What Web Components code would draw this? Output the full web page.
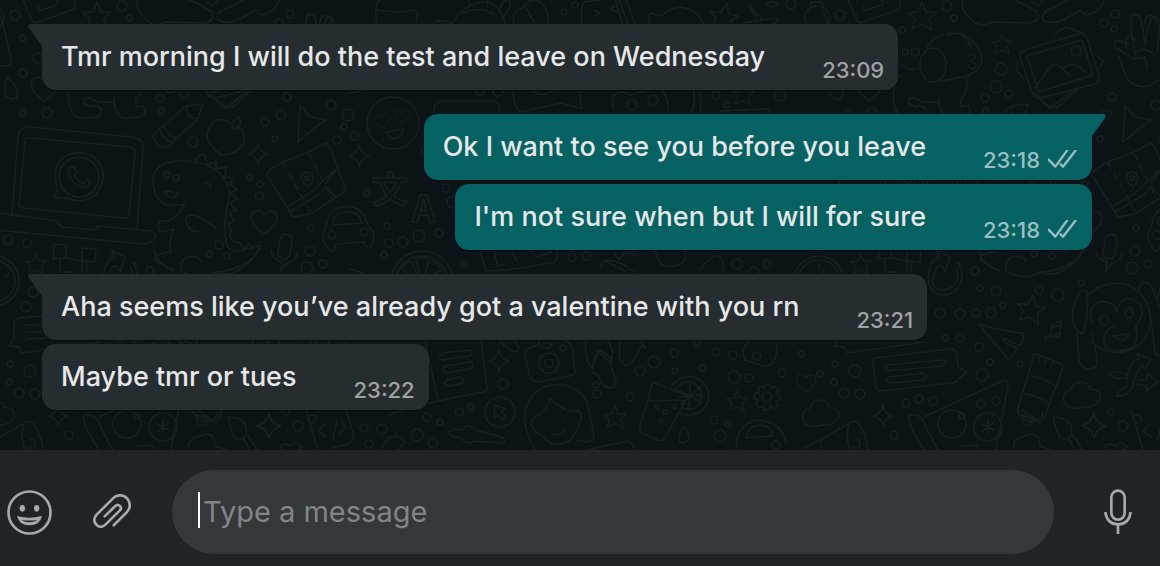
<!DOCTYPE html>
<html lang="en">
<head>
<meta charset="utf-8">
<meta name="viewport" content="width=device-width, initial-scale=1">
<title>Chat</title>
<style>
  body { margin: 0; background: #0c1317; font-family: Inter, "Liberation Sans", sans-serif; }
</style>
</head>
<body>
<chat-window>
  <chat-message tail time="23:09">Tmr morning I will do the test and leave on Wednesday</chat-message>
  <chat-message out tail time="23:18">Ok I want to see you before you leave</chat-message>
  <chat-message out time="23:18">I'm not sure when but I will for sure</chat-message>
  <chat-message tail time="23:21">Aha seems like you’ve already got a valentine with you rn</chat-message>
  <chat-message time="23:22">Maybe tmr or tues</chat-message>
  <message-composer slot="footer"></message-composer>
</chat-window>

<template id="wallpaper">
<style>
  :host { display: block; overflow: hidden; }
  svg { display: block; width: 100%; height: 100%; }
  text { font: 700 36px "Noto Sans CJK SC", sans-serif; }
</style>
<svg aria-hidden="true" fill="none" stroke="#181f23" stroke-width="1.6" stroke-linecap="round" stroke-linejoin="round">
  <defs>
    <path id="star" d="M0-14L4-4L14-4L7 3L10 14L0 8L-10 13L-7 3L-14-3L-4-4Z"/>
    <path id="spark" d="M0-11Q1-2 10 0Q2 2 0 10Q-1 2-10 0Q-2-2 0-11Z"/>
    <path id="heart" d="M0 12Q-12 3-13-3C-13-13-2-14 0-6C3-14 15-11 13-2Q10 6 0 12Z"/>
    <path id="cloud" d="M-17 8Q-22-3-11-6C-8-17 6-16 8-7Q20-6 18 4Q10 13 0 11Q-12 15-17 8Z"/>
    <path id="drop" d="M-4-12Q-8 2-5 7Q2 14 7 6Q7-3-4-12Z"/>
    <g id="cap"><path d="M-25 21C-23-9 23-9 25 21M-17 18C-14-3 15-3 17 18Z"/></g>
    <g id="doodles">
      <!-- top row -->
      <path d="M21-5L32 20Q34 24 38 22L72 10Q77 8 75 3L72-6M39 6Q37 11 42 10L56 5Q60 2 56 0M-2 10Q4 24 11 60Q12 66 5 66L-10 66"/>
      <use href="#star" x="97" y="16"/>
      <path d="M140-5Q133 8 143 16Q155 30 165 22L205 23Q216 20 212 12Q200 4 185-2M218 20Q215 12 228 8L250-4M218 20Q230 28 255 10Q262 20 275 8L282-4M207 2L213 6L218 1"/>
      <path d="M306 24Q304 13 311 14Q317 15 316 24M320 24Q320 14 327 16Q332 18 331 24M380 0Q373 4 377 24M377 10Q400 14 410 10L418 12L416 22"/>
      <path d="M435 22Q444 18 452 24Q462 5 482 2Q500 2 505 24M462 14Q478 5 494 14M470 8L468-2M487 7L488-2M499 12Q500 4 508-1Q514 4 502 19M514 22Q511 10 523 8Q527-1 538 0Q550 9 548 24M526 8L534 22"/>
      <path d="M582 24Q580 8 584 2L615-2L622 24M594 10L600 13L595 16M615 6L610 9L617 12M626 0L635 24M619 0L628 24M650 24Q646 14 652 13Q660 18 665 13C682 0 699 12 703 24"/>
      <use href="#star" x="724" y="17" transform="rotate(12 724 17)"/>
      <path d="M749 5L763 20L744 23M749 5L756 18M763 20L778 18Q777 25 766 25M765 4Q773-1 778 5Q771 9 765 4"/>
      <circle cx="817" cy="18" r="12"/><path d="M810 6Q811 0 817 2Q823 0 824 7"/>
      <!-- dog -->
      <ellipse cx="108" cy="65" rx="13" ry="17"/>
      <path d="M102 47Q112 33 127 33C149 32 163 58 154 68Q146 78 112 81M122 36Q137 27 147 48M144 56Q148 53 151 56Q149 62 144 61M148 63Q154 65 149 69Q144 69 144 65M135 53v2M75 64Q84 72 95 68M75 75Q65 88 70 107Q73 119 83 118L96 117Q103 116 101 109Q97 104 90 107L84 103Q82 96 91 98Q95 103 107 102M107 102L114 103Q117 118 126 118L140 117Q149 112 143 106L136 107L136 98M114 97L114 103M141 76Q145 88 137 98"/>
      <use href="#star" transform="translate(177 44) scale(.72)"/>
      <!-- picture -->
      <path d="M200 50L253 34Q260 32 262 38L274 76Q276 82 270 84L216 98Q209 99 207 93L195 57Q194 52 200 50ZM202 56L257 40L268 75L214 92ZM210 88L225 67Q231 62 237 68L246 77M238 69Q248 59 260 72M247 29L259 34M230 34Q241 23 249 31M216 99Q226 111 234 106L253 89M193 62L191 70L199 79M271 55L278 61L274 69"/>
      <circle cx="251" cy="51" r="5"/>
      <!-- hand -->
      <path d="M311 57Q302 18 310 15Q317 12 320 46M320 46Q323 15 331 17Q337 20 332 52M304 56Q298 52 291 48Q286 40 294 41L304 44M302 50Q298 36 306 36L311 41M294 57L302 79Q316 94 334 80M310 53Q319 45 329 55M306 58Q313 60 320 57L322 67"/>
      <use href="#drop" x="11" y="89"/>
      <use href="#heart" x="44" y="89"/>
      <!-- pencil, apple, plane -->
      <path d="M203 104L198 119L168 146Q162 151 155 141Q151 136 157 131L186 106ZM186 107Q187 118 197 119M160 130Q164 141 172 142M164 127Q168 136 176 138"/>
      <path d="M232 124Q237 115 240 118Q242 127 234 130Q232 128 232 124M232 124Q218 114 210 126Q203 139 213 147Q221 159 232 153Q245 149 244 136Q243 129 237 127"/>
      <path d="M300 105L310 117L326 120Q315 127 298 142Q299 122 300 105Z"/>
      <use href="#spark" x="258" y="154"/><use href="#spark" x="359" y="156"/>
      <!-- laptop -->
      <path d="M12 216L18 136Q19 126 31 127L131 137Q144 138 143 149L137 229M19 205L25 141Q26 137 31 138L130 147Q136 148 135 154L129 214Q128 219 123 218L24 208Q19 208 19 205ZM-15 211L57 221L62 227L95 230L98 226L151 231Q157 233 155 237Q152 244 143 244L-15 229"/>
      <circle cx="79" cy="177" r="20"/>
      <path d="M57 186C50 163 66 151 82 153C98 155 105 169 103 180C99 198 83 205 67 198L54 198L58 189M70 167Q74 165 77 172Q72 175 79 181Q84 187 87 179Q92 181 89 185Q83 191 73 182Q66 174 70 167Z"/>
      <!-- dinosaur -->
      <path d="M206 221Q190 211 186 218Q186 231 199 232M206 221L216 228M185 205Q172 224 160 221Q156 227 160 232L174 229Q168 241 171 252Q152 253 156 261L174 271M153 184C151 160 178 159 193 162C220 165 231 183 229 198Q223 223 226 242Q228 252 240 251L260 245Q255 263 230 270L213 273M181 271Q179 258 191 256Q198 256 201 261M153 184Q156 206 172 205L185 205M164 191Q177 192 178 194Q171 203 164 191M204 183Q209 181 211 187M196 161Q198 154 204 154L207 164L216 162L216 169L226 167L225 177L233 178L230 184L237 189L231 193L237 199L230 203L236 210L229 213L234 221L228 224L232 231L229 235L234 242L240 243L243 249L250 244L253 249"/>
      <circle cx="167" cy="175" r="3"/><circle cx="176" cy="178" r="3"/>
      <!-- map -->
      <path d="M269 170L283 162L309 152L326 143L331 149L346 191L310 214L293 217L267 175ZM288 206L309 194L336 169M291 211L317 196L326 187L337 198M336 170L326 183"/>
      <path stroke-dasharray="7 5" d="M283 163L310 211M309 154L331 197"/>
      <circle cx="307" cy="178" r="2"/><path d="M308 187Q299 179 302 175Q308 168 313 177Q313 183 308 187Z"/>
      <use href="#heart" x="264" y="222"/>
      <!-- car, microphone -->
      <path d="M326 228Q328 207 345 207Q362 204 368 226Q374 230 374 238L371 247Q367 251 364 242L336 244Q333 255 328 249L323 239Q322 232 326 228ZM333 225Q332 213 346 212Q359 211 362 223Z"/>
      <circle cx="332" cy="235" r="4"/><circle cx="364" cy="232" r="4"/>
      <rect x="279" y="234" width="12" height="25" rx="6" transform="rotate(9 285 247)"/>
      <path d="M271 250Q272 260 282 262L281 271L287 263Q296 262 297 253"/>
      <!-- smiling face -->
      <circle cx="393" cy="123" r="26"/>
      <use href="#heart" transform="translate(382 121) scale(.6)"/><use href="#heart" transform="translate(402 116) scale(.6)"/>
      <path d="M386 132L404 129Q400 141 391 138Z"/>
      <use href="#cap" x="358" y="277"/>
      <path d="M350 269L363 273"/>
      <!-- translation sign -->
      <text x="372" y="203">文</text>
      <text x="412" y="222">A</text>
      <circle cx="422" cy="282" r="31"/><circle cx="422" cy="282" r="26"/>
      <path d="M420 275L416 260Q423 255 429 260L425 275M411 276L402 268Q406 262 411 262L417 273M431 276L441 270Q437 262 432 261"/>
      <!-- middle strip -->
      <path d="M434 114L434 107Q436 101 443 101L492 101Q501 102 500 113M513 91Q514 108 520 112L561 103L582 109L579 92L588 88M532 90Q542 99 553 90M613 108L613 96Q622 89 630 95L645 91Q654 88 662 90Q669 98 668 110M693 90Q697 100 691 112M700 90Q702 101 700 112M647 104Q651 109 655 103M720 111L768 109Q771 110 769 114M346 94L369 89M210 93Q215 100 225 108L247 92"/>
      <circle cx="632" cy="105" r="5"/><circle cx="653" cy="100" r="5"/>
      <use href="#star" transform="translate(743 94) scale(.8)"/>
      <!-- clock, blocks, arrows -->
      <path d="M480 251L486 271M487 271Q520 270 554 262Q560 256 556 250M494 252L498 266L505 264M512 252L517 261M531 251L536 257L551 252M614 253L619 260L624 253L637 254M655 251Q660 270 674 266Q688 264 685 251M700 270Q713 253 719 256Q724 257 723 273M600 270L603 261Q618 258 634 272M606 262L626 271"/>
      <path d="M54 244L66 245L66 258L53 259ZM82 248L96 249L95 262L82 261ZM66 258L82 261L82 272M60 259L60 272L72 272M87 262L86 272"/>
      <path d="M107 263C99 280 104 295 119 295C134 294 142 278 133 263L137 264M112 267C103 285 109 290 119 290C129 289 136 278 131 268M107 263Q110 258 115 257L111 250L125 257L120 272L117 266L112 267"/>
      <use href="#star" transform="translate(36 264) scale(.72)"/>
      <circle cx="-6" cy="281" r="25"/><circle cx="-6" cy="281" r="21"/><path d="M-6 264v6M9 274l-3 2M-6 281l5-12"/>
      <path d="M154 251Q157 265 174 270M181 271Q200 282 215 272Q238 281 260 249"/>
      <!-- speech and paper -->
      <path d="M43 316L20 318Q14 319 14 324L14 338L9 346L19 347L22 353L100 342M25 325L43 325M25 332L43 332M27 339L46 338"/>
      <path d="M49 358L125 349Q131 348 132 355L133 367L142 372L133 379Q132 383 125 383L56 391Q51 391 51 386L48 363ZM62 365L118 360Q124 363 117 366L62 371Q58 368 62 365ZM63 377L98 373Q105 376 97 380L65 383Q60 380 63 377Z"/>
      <!-- star, paper plane, notes -->
      <use href="#star" x="206" y="309" transform="rotate(10 206 309)"/>
      <path d="M154 324Q176 331 198 333Q200 338 195 346L179 338Q174 341 192 348L187 357Q184 360 181 357ZM221 340Q219 334 226 337L227 325L236 321L235 333M226 328L236 325M235 333Q229 333 229 337Q234 339 235 333"/>
      <!-- monkey -->
      <path d="M262 296C275 282 298 279 312 290C327 304 330 324 318 341C303 357 278 356 265 340M263 299Q261 280 251 299Q244 315 251 329L257 334Q263 325 262 296M252 331L254 360Q258 374 270 367Q275 364 266 332M314 290Q316 277 326 285L338 316M326 318L330 353Q340 362 346 342M267 323Q262 306 275 302Q289 300 292 313Q294 297 306 299Q322 303 315 319Q305 338 311 326Q315 343 306 348Q288 355 279 345Q278 329 290 326M288 336L304 334Q299 345 288 336"/>
      <ellipse cx="279" cy="320" rx="4" ry="5"/><ellipse cx="304" cy="313" rx="4" ry="5"/>
      <!-- tube, cloud, branches -->
      <path d="M212 354L237 364Q239 366 237 370L219 419Q215 424 210 420L194 414Q192 411 194 405L208 358Q209 353 212 354ZM215 356L213 362M222 359L219 364M229 361L226 366M206 376Q222 378 231 387M200 394Q217 396 225 405M196 410Q205 414 214 422"/><circle cx="202" cy="421" r="5"/>
      <use href="#cloud" x="257" y="396"/><use href="#cloud" x="-4" y="414"/>
      <path d="M284 373Q297 370 302 376Q307 358 314 359L312 354L326 359L321 369L317 365Q309 376 308 385Q305 396 292 396Q289 394 301 387L302 378Q286 380 284 373M311 384L322 386L321 391L333 382L323 374L321 380L313 380"/>
      <use href="#heart" transform="translate(-19 383) scale(.75)"/>
      <!-- bottom row -->
      <path d="M-21 448L-5 440L23 424Q29 419 34 424Q42 437 43 450M24 424Q20 437 25 450M30 440Q37 437 34 448L28 448M-5 440L-3 450"/>
      <path d="M84 418Q80 414 90 415Q97 415 101 428L113 450M84 418Q83 424 94 442L99 450M99 417L177 381Q184 378 183 386L171 450M138 446L152 445L154 449"/>
      <circle cx="127" cy="424" r="14"/><circle cx="137" cy="416" r="3"/><circle cx="163" cy="427" r="14"/>
      <path d="M163 420L163 433M157 424L169 430M169 422L157 432M189 447Q186 438 208 434Q214 434 215 446L226 450"/>
      <path d="M228 417Q250 418 246 435Q241 441 235 438Q231 431 228 417ZM243 438L250 450M248 435L257 450"/>
      <use href="#spark" transform="translate(269 426) scale(1.2)"/><use href="#spark" x="58" y="416"/>
      <path d="M192 410Q195 419 203 421Q217 422 218 412M306 410L318 450M346 409L353 433Q355 441 348 444L333 448M324 425L318 431L326 437M337 421L333 439M341 421L346 427L339 434M282 450Q279 444 286 444L291 446L296 442L302 447L298 450"/>
      <!-- document, camera, slippers -->
      <path d="M425 340L438 400M481 341L487 388Q487 391 483 392L438 401L401 411L388 415M443 353L469 350Q475 352 469 356L442 360Q436 357 443 353ZM445 366L471 362Q476 366 469 369L447 373Q440 370 445 366ZM447 380L461 377Q466 381 460 384L449 386Q442 384 447 380ZM500 342L512 351Q519 353 519 347L512 339"/>
      <use href="#spark" x="499" y="361"/>
      <path d="M530 348L538 345L541 338L562 338L568 342Q572 344 573 354L575 370Q576 375 570 376L537 382Q531 381 529 374L525 354Q525 349 530 348ZM540 346Q546 341 552 345Q548 351 540 346"/>
      <circle cx="549" cy="363" r="10"/><circle cx="549" cy="363" r="4"/><circle cx="563" cy="348" r="3"/>
      <path d="M586 341Q583 355 592 369L597 350L610 363L612 358Q614 347 607 340M592 369Q596 357 600 350L612 359Q609 365 616 381Q617 388 611 388Q601 387 598 375L593 372M621 341Q616 360 625 365Q632 366 635 357L642 345L645 348L640 339"/>
      <!-- girl -->
      <path d="M535 450Q522 425 525 412C530 380 575 375 587 402L594 435Q594 441 587 442L577 440M550 398Q548 411 537 416Q529 420 533 428Q536 434 541 434Q552 450 569 441L577 431L579 424Q584 414 578 411Q563 413 550 398ZM554 435Q563 434 565 430M549 423v1M564 418v1M587 450L628 441Q634 443 635 450"/>
      <use href="#star" transform="translate(615 417) scale(.8)"/>
      <circle cx="500" cy="412" r="15"/><path d="M494 405L505 409L501 412L507 418L504 420L498 415L495 418ZM449 432Q454 428 462 430Q467 422 475 430L502 437Q507 440 503 443L475 441Q467 446 461 438L451 436Z"/>
      <!-- drink -->
      <path d="M653 382L688 396L665 438Q662 442 657 440L642 433Q639 430 640 426ZM649 401L686 400M671 387Q681 373 697 378Q713 388 707 404Q699 419 680 414M675 391Q681 379 694 383Q705 391 700 403Q694 412 683 408M690 384L689 408M679 390L700 402M700 387L681 404M678 397L702 395"/>
      <path d="M684 426Q676 440 680 442Q686 445 689 438Q688 430 684 426Z"/>
      <path d="M748 341Q740 354 745 360L764 366Q777 367 777 345M736 450Q736 423 758 420Q781 421 786 443M746 438Q748 426 760 425Q772 426 773 436Z"/>
      <use href="#star" transform="translate(737 401) scale(.75)"/>
      <circle cx="767" cy="397" r="5"/><path d="M764 388L765 384L770 384L771 388L775 386L779 390L776 394L780 396L780 400L776 401L778 406L774 409L770 406L769 410L764 410L763 406L759 408L756 404L758 400L754 398L755 393L759 393L758 388L761 386Z"/>
      <path d="M389 437L397 437L396 434L405 442L397 450M381 450Q384 440 393 437"/>
      <!-- scattered bubbles -->
      <g id="dots"></g>
    </g>
  </defs>
  <use href="#doodles" x="-825"/><use href="#doodles"/><use href="#doodles" x="825"/><use href="#doodles" x="1650"/>
</svg>
</template>

<script>
class ChatWallpaper extends HTMLElement {
  connectedCallback() {
    const root = this.attachShadow({ mode: 'open' });
    root.append(document.getElementById('wallpaper').content.cloneNode(true));
    const dots = [
      [15,15,5],[122,6,5],[129,18,3],[23,38,3],[38,58,5],[23,73,4],[23,113,3],[47,113,5],[160,98,4],[184,94,4],
      [161,111,3],[193,142,5],[287,97,4],[281,115,5],[265,122,4],[331,105,5],[348,115,6],[344,127,3],[354,136,4],[337,140,4],
      [275,139,3],[250,177,3],[260,184,3],[259,196,4],[367,193,3],[311,228,3],[310,251,5],[323,264,4],[307,268,6],[219,245,4],
      [209,254,3],[227,256,3],[150,271,4],[387,226,3],[389,243,4],[403,242,5],[419,236,6],[439,233,4],[384,255,3],[446,188,4],
      [453,202,6],[426,150,5],[8,240,5],[27,243,4],[33,292,5],[26,307,5],[10,364,3],[30,371,6],[9,382,3],[19,393,5],
      [35,394,5],[69,435,4],[90,52,4],[80,52,3],[77,30,3],[176,69,6],[171,87,6],[279,23,4],[290,14,4],[289,29,3],
      [115,313,5],[135,314,5],[151,313,4],[166,313,5],[171,291,5],[155,288,3],[178,305,3],[214,290,4],[233,295,6],[256,283,3],
      [120,338,3],[135,338,4],[154,347,4],[165,362,3],[195,364,3],[157,375,6],[-5,374,3],[-24,354,3],[-43,373,4],
      [81,403,4],[94,399,4],[108,401,4],[156,404,4],[171,401,4],[286,412,3],[298,426,5],[312,419,4],[364,428,4],[382,429,5],
      [427,417,4],[440,422,3],[459,412,4],[471,407,3],[417,435,6],[433,443,5],[503,384,5],[369,444,4],[597,394,4],[596,385,3],
      [630,397,4],[640,371,5],[654,362,6],[674,353,4],[675,371,3],[703,368,3],[697,343,3],[716,352,4],[733,355,4],[734,377,6],
      [749,378,4],[757,356,4],[714,420,4],[728,424,3],[720,436,6],[776,445,4],[657,407,2],[665,412,2],[675,407,2],[661,421,2],
      [464,264,3],[572,257,4],[586,256,4],[737,264,5],[767,264,4],[754,272,5],[564,12,3],[575,5,3],[716,95,4],[727,105,3],
      [780,95,6],[791,4,5],[480,91,4],[498,91,5]
    ];
    root.querySelector('#dots').innerHTML =
      dots.map(([x, y, r]) => `<circle cx="${x}" cy="${y}" r="${r}"/>`).join('');
  }
}

class ChatWindow extends HTMLElement {
  constructor() {
    super();
    this.attachShadow({ mode: 'open' }).innerHTML = `
      <style>
        :host { display: flex; flex-direction: column; min-height: 100vh; }
        main { position: relative; flex: 1; display: flex; flex-direction: column;
               justify-content: flex-end; align-items: flex-start; padding: 0 68px 40px 42px; }
        chat-wallpaper { position: absolute; inset: 0; }
      </style>
      <main><chat-wallpaper></chat-wallpaper><slot></slot></main>
      <slot name="footer"></slot>`;
  }
}

class ChatMessage extends HTMLElement {
  connectedCallback() {
    const out = this.hasAttribute('out');
    const tail = this.hasAttribute('tail');
    this.attachShadow({ mode: 'open' }).innerHTML = `
      <style>
        :host { position: relative; display: flex; align-items: flex-end; gap: 57px; box-sizing: border-box;
                margin-top: 4px; padding: 15px 14px 8px 19px; border-radius: 14px;
                background: var(--bubble); color: #e6e8e9; --bubble: #262d31; --meta: #a0a3a5;
                box-shadow: 0 1px 1px #0006; }
        :host([tail]) { margin-top: 24px; border-top-left-radius: 0; }
        :host([out]) { align-self: flex-end; --bubble: #056162; --meta: #9bbfc0; }
        :host([out][tail]) { border-top-left-radius: 14px; border-top-right-radius: 0; }
        p { margin: 0 0 7px; font-size: 27px; font-weight: 500; line-height: 36px; }
        .meta { flex: none; display: flex; align-items: center; gap: 8px; color: var(--meta);
                font-size: 22px; font-weight: 500; line-height: 24px; }
        .ticks { width: 30px; height: 20px; }
        .tail { position: absolute; top: 0; left: -14px; fill: var(--bubble); }
        :host([out]) .tail { left: auto; right: -14px; transform: scaleX(-1); }
      </style>
      ${tail ? '<svg class="tail" width="14" height="22" viewBox="0 0 14 22" aria-hidden="true"><path d="M14 0H2Q-1 1 1 4L14 22Z"/></svg>' : ''}
      <p><slot></slot></p>
      <span class="meta"><time>${this.getAttribute('time')}</time>${out ? `
        <svg class="ticks" viewBox="264 151 90 60" role="img" aria-label="Delivered" fill="none" stroke="currentColor" stroke-width="7" stroke-linecap="round" stroke-linejoin="round"><path d="M266 180L286 201L321 153M302 194L309 201L346 153"/></svg>` : ''}</span>`;
  }
}

class MessageComposer extends HTMLElement {
  constructor() {
    super();
    this.attachShadow({ mode: 'open' }).innerHTML = `
      <style>
        :host { position: relative; display: block; background: #1e2428; }
        form { display: flex; align-items: center; gap: 41px; padding: 20px 19px 12px 7px; }
        button { flex: none; margin: 0; padding: 0; border: 0; background: none; color: #a7a9ab; cursor: pointer; }
        svg { display: block; fill: none; stroke: currentColor; stroke-width: 8; stroke-linecap: round; stroke-linejoin: round; }
        .field { flex: 1; min-width: 0; display: flex; align-items: center; gap: 3px; height: 84px; box-sizing: border-box;
                 padding: 0 26px; border-radius: 42px; background: #33383b; }
        .caret { width: 2px; height: 36px; margin-bottom: 4px; background: #fff; }
        input { flex: 1; min-width: 0; padding: 0; border: 0; outline: 0; background: none; color: #e9eaeb;
                font: 29px/40px Inter, "Liberation Sans", sans-serif; }
        input::placeholder { color: #828587; opacity: 1; }
      </style>
      <form>
        <button type="button" aria-label="Emoji"><svg width="45" height="45" viewBox="21 119 135 135"><circle cx="88.500" cy="186.500" r="63"/><g fill="currentColor" stroke="none"><ellipse cx="67" cy="174" rx="8" ry="10"/><ellipse cx="110" cy="174" rx="8" ry="10"/><path fill-rule="evenodd" d="M51 197Q88 207 126 197Q120 225 88 225Q58 225 51 197ZM63 208Q88 223 114 208Q88 213 63 208Z"/></g></svg></button>
        <button type="button" aria-label="Attach"><svg width="38" height="38" viewBox="279 129 114 114"><path d="M341 226L381 186C400 164 382 134 358 136C350 137 345 139 339 145L290 194C273 213 291 232 305 230C310 229 313 227 317 223L359 182C369 172 355 159 346 168L314 199"/></svg></button>
        <label class="field"><span class="caret"></span><input type="text" placeholder="Type a message" aria-label="Type a message"></label>
        <button type="button" aria-label="Record voice"><svg width="46" height="46" viewBox="225 117 138 138"><rect x="274" y="122" width="40" height="87" rx="20"/><path stroke-linecap="butt" d="M256 186Q261 223 294 223Q327 223 332 186M294 223V252"/></svg></button>
      </form>`;
  }
}

customElements.define('chat-wallpaper', ChatWallpaper);
customElements.define('message-composer', MessageComposer);
customElements.define('chat-message', ChatMessage);
customElements.define('chat-window', ChatWindow);
</script>
</body>
</html>
